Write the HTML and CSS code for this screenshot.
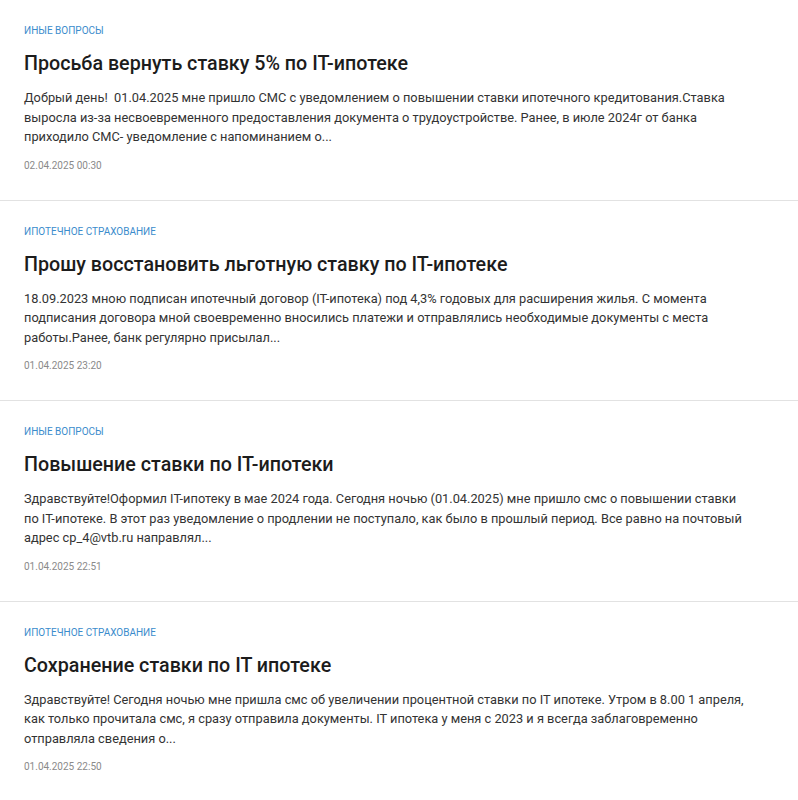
FILE: index.html
```html
<!DOCTYPE html>
<html lang="ru">
<head>
<meta charset="utf-8">
<link rel="stylesheet" href="styles.css">
</head>
<body>
<div class="feed">
  <article class="item">
    <div class="cat">ИНЫЕ ВОПРОСЫ</div>
    <h2 class="title">Просьба вернуть ставку 5% по IT-ипотеке</h2>
    <p class="text">Добрый день!&nbsp; 01.04.2025 мне пришло СМС с уведомлением о повышении ставки ипотечного кредитования.Ставка<br>выросла из-за несвоевременного предоставления документа о трудоустройстве. Ранее, в июле 2024г от банка<br>приходило СМС- уведомление с напоминанием о...</p>
    <div class="date">02.04.2025 00:30</div>
  </article>
  <article class="item">
    <div class="cat">ИПОТЕЧНОЕ СТРАХОВАНИЕ</div>
    <h2 class="title">Прошу восстановить льготную ставку по IT-ипотеке</h2>
    <p class="text">18.09.2023 мною подписан ипотечный договор (IT-ипотека) под 4,3% годовых для расширения жилья. С момента<br>подписания договора мной своевременно вносились платежи и отправлялись необходимые документы с места<br>работы.Ранее, банк регулярно присылал...</p>
    <div class="date">01.04.2025 23:20</div>
  </article>
  <article class="item">
    <div class="cat">ИНЫЕ ВОПРОСЫ</div>
    <h2 class="title">Повышение ставки по IT-ипотеки</h2>
    <p class="text">Здравствуйте!Оформил IT-ипотеку в мае 2024 года. Сегодня ночью (01.04.2025) мне пришло смс о повышении ставки<br>по IT-ипотеке. В этот раз уведомление о продлении не поступало, как было в прошлый период. Все равно на почтовый<br>адрес cp_4@vtb.ru направлял...</p>
    <div class="date">01.04.2025 22:51</div>
  </article>
  <article class="item">
    <div class="cat">ИПОТЕЧНОЕ СТРАХОВАНИЕ</div>
    <h2 class="title">Сохранение ставки по IT ипотеке</h2>
    <p class="text">Здравствуйте! Сегодня ночью мне пришла смс об увеличении процентной ставки по IT ипотеке. Утром в 8.00 1 апреля,<br>как только прочитала смс, я сразу отправила документы. IT ипотека у меня с 2023 и я всегда заблаговременно<br>отправляла сведения о...</p>
    <div class="date">01.04.2025 22:50</div>
  </article>
</div>
</body>
</html>
```

FILE: styles.css
```css
html, body {
  margin: 0;
  padding: 0;
  background: #ffffff;
}
body {
  font-family: Roboto, "Noto Sans", "Liberation Sans", sans-serif;
  color: #222222;
}
.feed {
  display: flex;
  flex-direction: column;
}
.item {
  padding: 23px 10px 27px 24px;
  border-bottom: 1px solid #e2e2e2;
  display: flex;
  flex-direction: column;
}
.cat {
  font-size: 10px;
  line-height: 16px;
  color: #3b8ccc;
}
.title {
  margin: 12px 0 0;
  font-size: 19.7px;
  line-height: 26px;
  font-weight: 500;
  color: #1c1c1c;
}
.text {
  margin: 11px 0 0;
  font-size: 12.8px;
  line-height: 19.5px;
  color: #333333;
  white-space: nowrap;
}
.date {
  margin-top: 12px;
  font-size: 10px;
  line-height: 14px;
  color: #8a8a8a;
}
```
